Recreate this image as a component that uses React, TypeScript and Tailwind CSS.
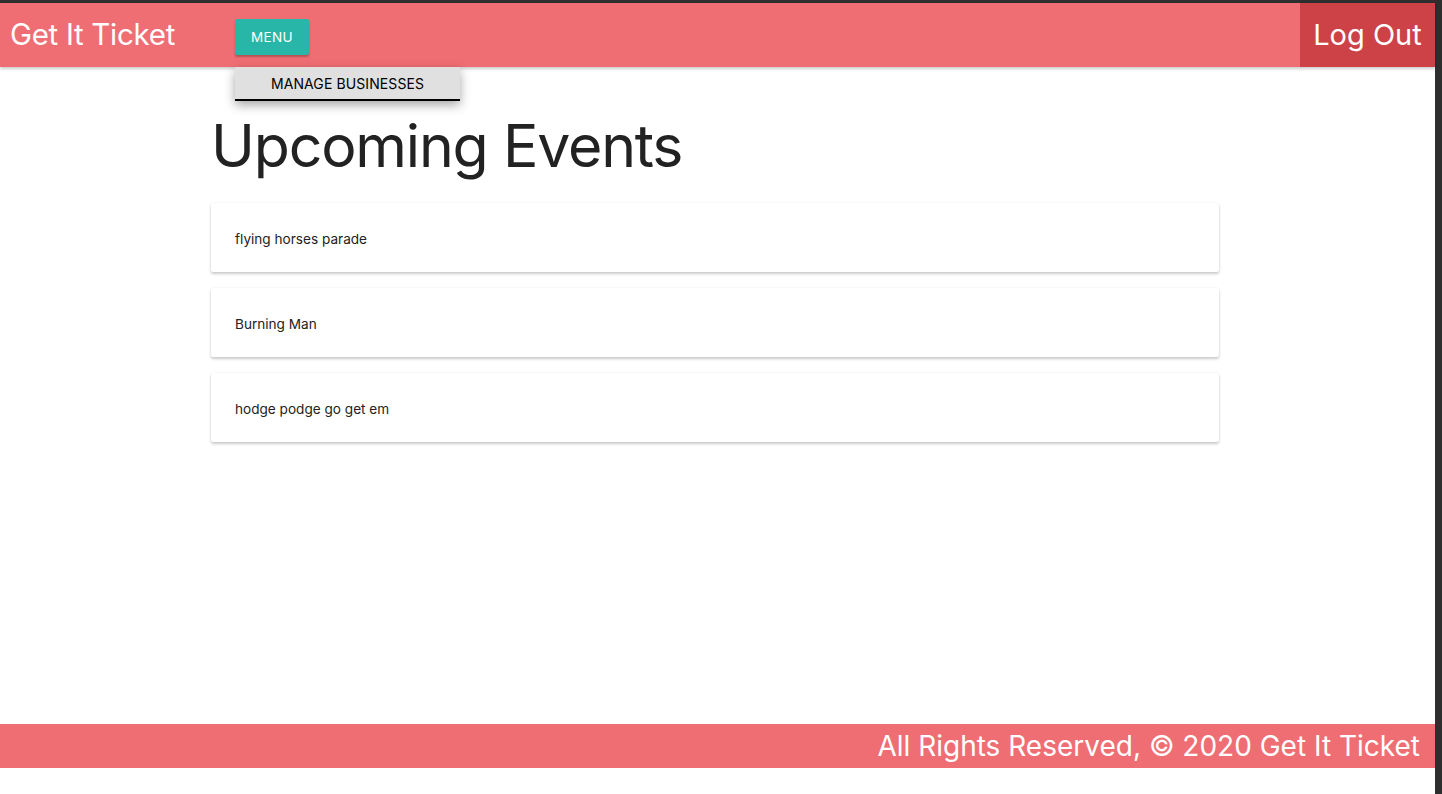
const events = ["flying horses parade", "Burning Man", "hodge podge go get em"];

const App = () => {
  return (
    <div
      className="flex h-[794px] w-full bg-[#2e2e2e] pt-[3px] pr-[7px] text-[#222]"
      style={{ fontFamily: "Inter, 'Noto Sans', sans-serif" }}
    >
      <div className="flex flex-1 flex-col bg-white">
        <header className="relative z-10 flex h-16 items-center bg-[#ef6e73] shadow-[0_2px_3px_rgba(0,0,0,0.2)]">
          <div className="w-[235px] pl-[10px]">
            <a className="text-[29.5px] leading-none text-white tracking-[-0.3px]">Get It Ticket</a>
          </div>
          <div className="relative mt-[4px]">
            <button className="h-9 rounded-[2px] bg-[#27b6a8] px-4 text-[13.5px] tracking-[0.3px] text-white shadow-[0_2px_2px_rgba(0,0,0,0.25)]">
              MENU
            </button>
            <div className="absolute left-0 top-[48px] flex h-[34px] w-[225px] items-center justify-center border-b-2 border-black bg-[#e0e0e0] text-[14px] tracking-[0.1px] text-black shadow-[0_4px_10px_rgba(0,0,0,0.35)]">
              MANAGE BUSINESSES
            </div>
          </div>
          <button className="ml-auto flex h-full w-[135px] items-center justify-center bg-[#cc4246] text-[29px] text-white">
            Log Out
          </button>
        </header>
        <main className="flex-1">
          <div className="ml-[211px] w-[1008px]">
            <h1 className="mt-[46px] text-[59px] font-normal leading-[66px] tracking-[-1.2px] text-[#222]">
              Upcoming Events
            </h1>
            <div className="mt-[24px] flex flex-col gap-4">
              {events.map((name) => (
                <div
                  key={name}
                  className="flex h-[69px] items-center rounded-[2px] bg-white px-6 pt-[3px] text-[13.6px] shadow-[0_2px_3px_rgba(0,0,0,0.2),0_0_2px_rgba(0,0,0,0.08)]"
                >
                  {name}
                </div>
              ))}
            </div>
          </div>
        </main>
        <footer className="flex h-[44px] items-center justify-end bg-[#ef6e73] pr-[15px] text-[28px] text-white">
          All Rights Reserved, © 2020 Get It Ticket
        </footer>
        <div className="h-[26px]" />
      </div>
    </div>
  );
};

export default App;
